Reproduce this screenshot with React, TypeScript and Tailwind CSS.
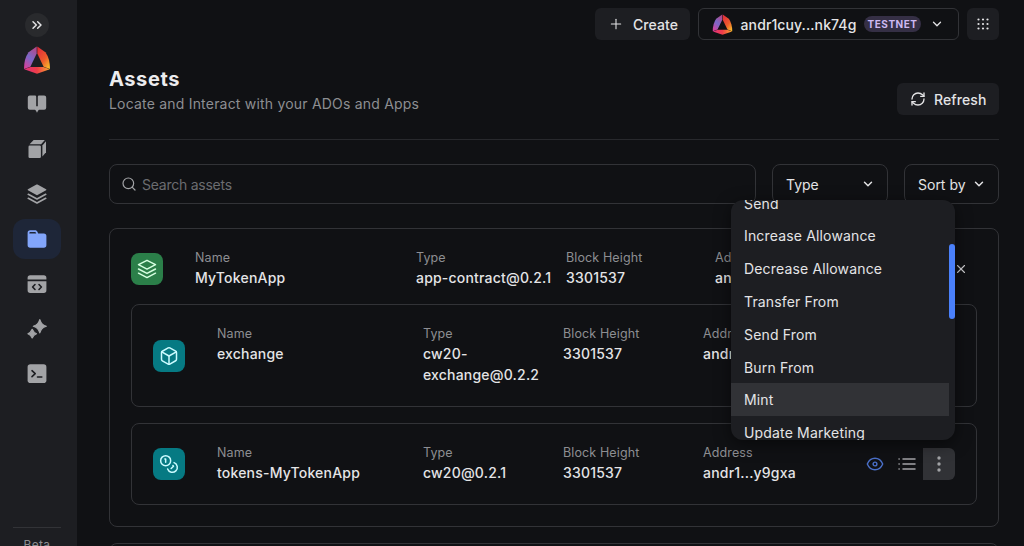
import React from "react";
import { Plus, Search, RefreshCw, ChevronDown, ChevronsRight, X, Coins, Box } from "lucide-react";

function Logo({ size, id }: { size: number; id: string }) {
  return (
    <svg width={size} height={size} viewBox="0 0 28 28">
      <defs>
        <linearGradient id={`${id}-l`} x1="0.7" y1="0" x2="0.2" y2="1">
          <stop offset="0" stopColor="#b04a8c" />
          <stop offset="0.5" stopColor="#7a68c8" />
          <stop offset="1" stopColor="#d8409a" />
        </linearGradient>
        <linearGradient id={`${id}-r`} x1="0.1" y1="0" x2="0.8" y2="1">
          <stop offset="0" stopColor="#e02a3c" />
          <stop offset="0.6" stopColor="#ee5a2c" />
          <stop offset="1" stopColor="#f8b62c" />
        </linearGradient>
        <linearGradient id={`${id}-b`} x1="0" y1="0" x2="1" y2="0">
          <stop offset="0" stopColor="#e0307e" />
          <stop offset="0.5" stopColor="#ee3d48" />
          <stop offset="1" stopColor="#f9a72d" />
        </linearGradient>
      </defs>
      <path d="M13.700 0.500 L13.700 7.500 L7.400 20.800 L1 23 Q1 12.500 5.600 6.200 Z" fill={`url(#${id}-l)`} />
      <path d="M14.300 0.500 L22.400 6.200 Q27 12.500 27 23 L20.600 20.800 L14.300 7.500 Z" fill={`url(#${id}-r)`} />
      <path d="M1.200 23.200 L7.600 21 L20.400 21 L26.800 23.200 L14 27.700 Z" fill={`url(#${id}-b)`} />
    </svg>
  );
}

const navIcons: React.ReactNode[] = [
  <svg key="book" width="20" height="20" viewBox="0 0 20 20" fill="currentColor">
    <path d="M2.800 1.500H8a1.200 1.200 0 0 1 1.200 1.200v9.500h1.600V2.700A1.200 1.200 0 0 1 12 1.500h5.200a2 2 0 0 1 2 2v10.300a2 2 0 0 1-2 2h-4.600c-.8 0-1.200.5-1.700 1.300L10 18.800l-.9-1.700c-.5-.8-.9-1.300-1.700-1.300H2.800a2 2 0 0 1-2-2V3.500a2 2 0 0 1 2-2z" />
  </svg>,
  <svg key="cube" width="20" height="20" viewBox="0 0 20 20" fill="currentColor">
    <path d="M6.600 1h11.200l-3.700 4.300H2.600z" />
    <path d="M19 2.300v11L15.400 17.600V6.400z" />
    <rect x="1.500" y="6.600" width="12.400" height="12.400" rx="1.200" />
  </svg>,
  <svg key="layers" width="20" height="20" viewBox="0 0 20 20" fill="currentColor">
    <path d="M9.500.6a1 1 0 0 1 1 0l8.600 4.700c.4.2.4.8 0 1l-8.600 4.700a1 1 0 0 1-1 0L.9 6.300c-.4-.2-.4-.8 0-1z" />
    <path d="M1.300 10.300 10 14.900 18.700 10.300M1.300 14.300 10 18.900 18.700 14.300" fill="none" stroke="currentColor" strokeWidth="1.700" strokeLinecap="round" strokeLinejoin="round" />
  </svg>,
  <svg key="folder" width="20" height="20" viewBox="0 0 20 20" fill="currentColor">
    <path fillRule="evenodd" d="M3.200 1.300h4.900c1.100 0 1.800.5 2.300 1.500l.8 1.700h5.600a2.600 2.600 0 0 1 2.600 2.600v9a2.600 2.600 0 0 1-2.600 2.600H3.200a2.600 2.600 0 0 1-2.600-2.600V3.900a2.600 2.600 0 0 1 2.600-2.600zM2.300 4.500h7l-.6-1.100c-.2-.3-.4-.4-.8-.4H3.300c-.7 0-1 .5-1 1.500z" />
  </svg>,
  <svg key="browser" width="20" height="20" viewBox="0 0 20 20" fill="currentColor">
    <path d="M3.200 1.300h13.600a2.600 2.600 0 0 1 2.600 2.600v1.600H.6V3.900a2.600 2.600 0 0 1 2.600-2.600z" />
    <path d="M.6 7.200h18.800v9.100a2.600 2.600 0 0 1-2.600 2.600H3.200a2.600 2.600 0 0 1-2.600-2.600z" />
    <path d="m8 10.500-2.400 2.500L8 15.500M12 10.500l2.400 2.500-2.400 2.500" fill="none" stroke="#1d1e22" strokeWidth="1.600" strokeLinecap="round" strokeLinejoin="round" />
  </svg>,
  <svg key="sparkle" width="20" height="20" viewBox="0 0 20 20" fill="currentColor" stroke="currentColor" strokeWidth="1.200" strokeLinejoin="round">
    <path d="M12.800.6c1.500 4.100 2.400 5.200 6.500 6.700-4.100 1.500-5 2.500-6.500 6.600-1.500-4.100-2.400-5.100-6.500-6.600 4.100-1.500 5-2.600 6.500-6.700z" />
    <path d="M5.200 10.300c1.100 2.700 1.800 3.400 4.300 4.400-2.500 1-3.200 1.700-4.300 4.300-1.100-2.600-1.800-3.300-4.300-4.300 2.500-1 3.200-1.700 4.300-4.400z" />
  </svg>,
  <svg key="terminal" width="20" height="20" viewBox="0 0 20 20" fill="currentColor">
    <rect x="0.600" y="0.300" width="18.800" height="18.800" rx="2.800" />
    <path d="m5 6.700 3.200 3L5 12.700M10.500 13h4.300" fill="none" stroke="#1d1e22" strokeWidth="1.600" strokeLinecap="round" strokeLinejoin="round" />
  </svg>,
];

function Sidebar() {
  return (
    <aside className="flex h-[546px] w-[77px] shrink-0 flex-col items-center bg-[#1d1e22] pr-[3px] text-[#a2a3a6]">
      <div className="mt-[13px] flex size-6 shrink-0 items-center justify-center rounded-full bg-[#292a2d] text-[#e4e4e6]">
        <ChevronsRight size={16} strokeWidth={2.2} />
      </div>
      <div className="mt-[9px] flex h-7 shrink-0 items-center">
        <Logo size={28} id="side" />
      </div>
      <nav className="mt-[10px] flex flex-col gap-[5px]">
        {navIcons.map((icon, i) => (
          <div
            key={i}
            className={
              i === 3
                ? "flex h-10 w-12 items-center justify-center rounded-xl bg-[#1e2638] text-[#82a5fb]"
                : "flex h-10 w-12 items-center justify-center"
            }
          >
            {icon}
          </div>
        ))}
      </nav>
      <div className="mt-auto flex h-[19px] w-12 shrink-0 items-start justify-center overflow-hidden border-t border-[#323337] pt-2 text-[12px] leading-[18px] tracking-[0.3px] text-[#8d8e92]">
        Beta
      </div>
    </aside>
  );
}

function DotsGrid() {
  return (
    <svg width="12" height="12" viewBox="0 0 12 12" fill="#e4e4e6">
      {[1.500, 6, 10.500].map((y) => [1.500, 6, 10.500].map((x) => <circle key={`${x}-${y}`} cx={x} cy={y} r="1.100" />))}
    </svg>
  );
}

function TopBar() {
  return (
    <header className="flex h-8 shrink-0 justify-end gap-2 text-[14px] font-medium tracking-[0.08px] text-[#e4e4e6]">
      <button className="flex w-[95px] items-center gap-[9px] rounded-md bg-[#1d1e22] pl-[13px]">
        <Plus size={16} strokeWidth={1.600} />
        Create
      </button>
      <button className="flex w-[261px] items-center rounded-md border border-[#323337] pl-[13px]">
        <Logo size={21} id="top" />
        <span className="ml-[7px] w-[117px] tracking-[0.1px]">andr1cuy...nk74g</span>
        <span className="ml-[7px] flex h-4 w-[57px] items-center justify-center rounded-full bg-[#352f45] text-[10px] font-bold tracking-[0.5px] text-[#cdb9f2]">
          TESTNET
        </span>
        <ChevronDown size={14} strokeWidth={2.200} className="ml-[9px]" />
      </button>
      <button className="flex w-8 items-center justify-center rounded-md bg-[#1d1e22]">
        <DotsGrid />
      </button>
    </header>
  );
}

function LayersIcon() {
  return (
    <svg width="20" height="20" viewBox="0 0 20 20" fill="none" stroke="#d5ffe0" strokeWidth="1.500" strokeLinecap="round" strokeLinejoin="round">
      <path d="M10 1.300 18.500 5.700 10 10.100 1.500 5.700zM1.500 10 10 14.400 18.500 10M1.500 14.200 10 18.600 18.500 14.200" />
    </svg>
  );
}

function Field({ label, value }: { label: string; value: string }) {
  return (
    <div>
      <div className="text-[12.5px] leading-[18px] tracking-[0.12px] text-[#8d8e92]">{label}</div>
      <div className="text-[14px] leading-[21px] font-medium tracking-[0.2px] text-[#e4e4e6]">{value}</div>
    </div>
  );
}

const menuItems = [
  "Send",
  "Increase Allowance",
  "Decrease Allowance",
  "Transfer From",
  "Send From",
  "Burn From",
  "Mint",
  "Update Marketing",
];

function ActionMenu() {
  return (
    <div className="absolute right-0 bottom-full z-10 mb-2 flex h-60 w-56 overflow-hidden rounded-xl bg-[#1d1e22] shadow-[0_4px_16px_rgba(0,0,0,0.5)]">
      <div className="-mt-[12.8px] flex flex-1 flex-col text-[14px] tracking-[0.16px] text-[#e4e4e6]">
        {menuItems.map((item) => (
          <div
            key={item}
            className={
              item === "Mint"
                ? "flex h-[32.8px] shrink-0 items-center bg-[#313236] pl-[13px]"
                : "flex h-[32.8px] shrink-0 items-center pl-[13px]"
            }
          >
            {item}
          </div>
        ))}
      </div>
      <div className="w-1.5 pt-11">
        <div className="h-[75px] rounded-full bg-[#4a80fa]" />
      </div>
    </div>
  );
}

function RowActions() {
  return (
    <div className="relative flex h-8 w-24">
      <div className="flex w-8 items-center justify-center">
        <svg width="18" height="18" viewBox="0 0 18 18" fill="none" stroke="#4a6fc8" strokeWidth="1.400">
          <path d="M1.300 9C2.800 5.300 5.700 3.200 9 3.200S15.200 5.300 16.700 9C15.200 12.700 12.300 14.800 9 14.800S2.800 12.700 1.300 9z" />
          <circle cx="9" cy="9" r="1.900" />
        </svg>
      </div>
      <div className="flex w-8 items-center justify-center">
        <svg width="18" height="14" viewBox="0 0 18 14" fill="none" stroke="#a2a3a6" strokeWidth="1.500" strokeLinecap="round">
          <path d="M5 2h12M5 7h12M5 12h12M1 2h.2M1 7h.2M1 12h.2" />
        </svg>
      </div>
      <div className="flex w-8 items-center justify-center rounded-r-md bg-[#313236]">
        <svg width="4" height="16" viewBox="0 0 4 16" fill="#a2a3a6">
          <circle cx="2" cy="2" r="1.700" />
          <circle cx="2" cy="8" r="1.700" />
          <circle cx="2" cy="14" r="1.700" />
        </svg>
      </div>
      <ActionMenu />
    </div>
  );
}

function ChildCard({ icon, name, type, address, actions }: { icon: React.ReactNode; name: string; type: string; address: string; actions?: React.ReactNode }) {
  return (
    <div className="grid grid-cols-[64px_206px_140px_140px_156px_96px] items-center rounded-lg border border-[#323337] pt-5 pb-[21px] pl-[21px]">
      <div className="mt-px flex size-8 items-center justify-center rounded-lg bg-[#067a83] text-[#cbfbff]">{icon}</div>
      <div className="self-start">
        <Field label="Name" value={name} />
      </div>
      <div className="w-[124px] self-start">
        <Field label="Type" value={type} />
      </div>
      <div className="self-start">
        <Field label="Block Height" value="3301537" />
      </div>
      <div className="self-start">
        <Field label="Address" value={address} />
      </div>
      {actions}
    </div>
  );
}

export default function App() {
  return (
    <div className="flex h-[546px] w-full overflow-hidden bg-[#101114] font-['Inter',sans-serif]">
      <Sidebar />
      <main className="flex min-w-0 flex-1 flex-col pt-2 pr-[25px] pl-8">
        <TopBar />
        <div className="mt-6 flex h-[75px] shrink-0 justify-between">
          <div className="pt-px">
            <h1 className="text-[20px] leading-7 font-bold tracking-[0.6px] text-[#ececee]">Assets</h1>
            <p className="text-[14px] leading-[21px] tracking-[0.2px] text-[#8d8e92]">Locate and Interact with your ADOs and Apps</p>
          </div>
          <button className="mt-[19px] flex h-8 w-[102px] items-center gap-2 rounded-md bg-[#1d1e22] pl-[13px] text-[14px] font-medium tracking-[0.1px] text-[#e4e4e6]">
            <RefreshCw size={16} strokeWidth={2} />
            Refresh
          </button>
        </div>
        <div className="h-px shrink-0 bg-[#28292d]" />
        <div className="mt-6 flex h-10 shrink-0 gap-4 text-[14px] text-[#e4e4e6]">
          <div className="flex flex-1 items-center gap-[5px] rounded-lg border border-[#323337] pl-[11px] tracking-[-0.25px] text-[#6b6c70]">
            <Search size={16} strokeWidth={1.800} className="text-[#a2a3a6]" />
            Search assets
          </div>
          <div className="flex w-[116px] items-center justify-between rounded-lg border border-[#323337] pr-3 pl-[13px]">
            Type
            <ChevronDown size={14} strokeWidth={2.500} />
          </div>
          <div className="flex w-[95px] items-center justify-between rounded-lg border border-[#323337] pr-3 pl-[13px]">
            Sort by
            <ChevronDown size={14} strokeWidth={2.500} />
          </div>
        </div>
        <section className="mt-6 flex h-[299px] shrink-0 flex-col rounded-lg border border-[#323337] px-[21px] pt-5">
          <div className="grid grid-cols-[64px_221px_150px_149px_235px_20px] items-center">
            <div className="flex size-8 items-center justify-center rounded-lg bg-[#2b7f49]">
              <LayersIcon />
            </div>
            <Field label="Name" value="MyTokenApp" />
            <Field label="Type" value="app-contract@0.2.1" />
            <Field label="Block Height" value="3301537" />
            <Field label="Address" value="andr1...q8k2p" />
            <X size={14} strokeWidth={1.900} className="ml-1 text-[#d0d0d3]" />
          </div>
          <div className="mt-4 flex flex-col gap-4">
            <ChildCard icon={<Box size={20} strokeWidth={1.800} />} name="exchange" type="cw20-exchange@0.2.2" address="andr1...m4x7d" />
            <ChildCard icon={<Coins size={20} strokeWidth={1.800} />} name="tokens-MyTokenApp" type="cw20@0.2.1" address="andr1...y9gxa" actions={<RowActions />} />
          </div>
        </section>
        <section className="mt-4 h-20 shrink-0 rounded-lg border border-[#323337]" />
      </main>
    </div>
  );
}
